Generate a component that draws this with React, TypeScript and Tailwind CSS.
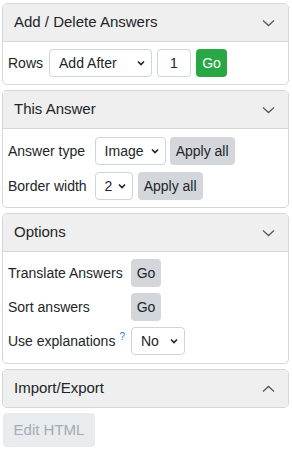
import React from "react";

function HeaderChevron({ up = false }: { up?: boolean }) {
  return (
    <svg width="13" height="8" viewBox="0 0 13 8" fill="none" className="shrink-0">
      {up ? (
        <path d="M1 6.5L6.5 1.5L12 6.5" stroke="#555b61" strokeWidth="1.3" />
      ) : (
        <path d="M1 1.5L6.5 6.5L12 1.5" stroke="#555b61" strokeWidth="1.3" />
      )}
    </svg>
  );
}

function SelChevron() {
  return (
    <svg width="8" height="6" viewBox="0 0 8 6" fill="none" className="shrink-0">
      <path d="M1 1.5L4 4.5L7 1.5" stroke="#222" strokeWidth="1.6" />
    </svg>
  );
}

function Select({ value, w }: { value: string; w: string }) {
  return (
    <div
      className={`${w} h-[28px] shrink-0 border border-[#ced4da] rounded-[4px] bg-white flex items-center justify-between pl-[9px] pr-[6px] text-[14px] text-[#212529]`}
    >
      <span>{value}</span>
      <SelChevron />
    </div>
  );
}

function GrayBtn({ children, w }: { children: React.ReactNode; w: string }) {
  return (
    <button
      className={`${w} h-[28px] shrink-0 rounded-[4px] bg-[#d3d6da] text-[14px] text-[#212529] flex items-center justify-center`}
    >
      {children}
    </button>
  );
}

function Panel({
  title,
  children,
  open = true,
}: {
  title: string;
  children?: React.ReactNode;
  open?: boolean;
}) {
  return (
    <div className="border border-[#d6d6d6] rounded-[5px] overflow-hidden mb-[5px] bg-white">
      <div
        className={`${open ? "h-[38px] border-b border-[#d6d6d6]" : "h-[37px]"} bg-[#efefef] flex items-center justify-between pl-[11px] pr-[13px] text-[15px] text-[#212529]`}
      >
        <span>{title}</span>
        <HeaderChevron up={!open} />
      </div>
      {open && children}
    </div>
  );
}

export default function App() {
  return (
    <div className="pt-[3px] pl-[2px] pr-[3px] font-['Liberation_Sans',Arial,sans-serif] text-[14px] text-[#212529] bg-white">
      <Panel title="Add / Delete Answers">
        <div className="flex items-center pl-[5px] pt-[7px] pb-[7px]">
          <span className="mr-[6px]">Rows</span>
          <Select value="Add After" w="w-[103px]" />
          <input
            readOnly
            value="1"
            className="ml-[5px] w-[34px] h-[28px] border border-[#ced4da] rounded-[4px] text-center text-[14px] bg-white"
          />
          <button className="ml-[5px] w-[31px] h-[28px] rounded-[4px] bg-[#28a745] text-white text-[14px] flex items-center justify-center">
            Go
          </button>
        </div>
      </Panel>

      <Panel title="This Answer">
        <div className="grid grid-cols-[auto_1fr] gap-x-[8px] gap-y-[7px] items-center pl-[5px] pt-[8px] pb-[7px]">
          <span>Answer type</span>
          <div className="flex items-center gap-[4px]">
            <Select value="Image" w="w-[71px]" />
            <GrayBtn w="w-[65px]">Apply all</GrayBtn>
          </div>
          <span>Border width</span>
          <div className="flex items-center gap-[5px]">
            <Select value="2" w="w-[38px]" />
            <GrayBtn w="w-[65px]">Apply all</GrayBtn>
          </div>
        </div>
      </Panel>

      <Panel title="Options">
        <div className="grid grid-cols-[auto_1fr] gap-x-[6px] gap-y-[6px] items-center pl-[5px] pt-[7px] pb-[8px]">
          <span>Translate Answers</span>
          <div className="flex">
            <GrayBtn w="w-[30px]">Go</GrayBtn>
          </div>
          <span>Sort answers</span>
          <div className="flex">
            <GrayBtn w="w-[30px]">Go</GrayBtn>
          </div>
          <span className="flex items-start">
            Use explanations
            <span className="ml-[4px] text-[10px] leading-none text-[#3b6cf0] mt-[1px]">?</span>
          </span>
          <div className="flex">
            <Select value="No" w="w-[54px]" />
          </div>
        </div>
      </Panel>

      <Panel title="Import/Export" open={false} />

      <button className="ml-[1px] h-[34px] w-[92px] rounded-[4px] bg-[#e9ecef] text-[#a3abb3] text-[15px] flex items-center justify-center">
        Edit HTML
      </button>
    </div>
  );
}
